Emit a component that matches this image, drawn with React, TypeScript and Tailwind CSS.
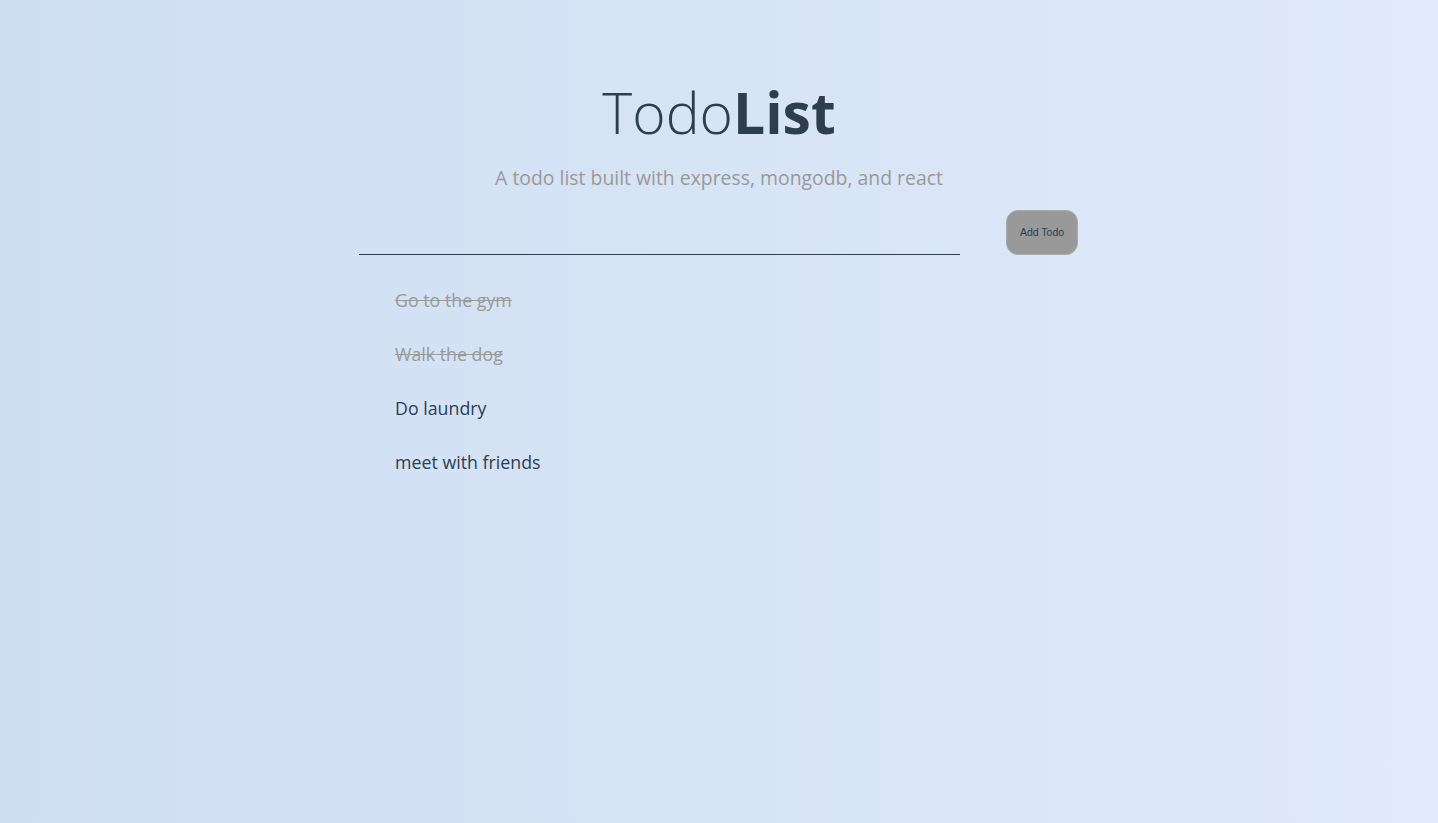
import React from 'react';

const App: React.FC = () => {
  const todos = [
    { text: 'Go to the gym', done: true },
    { text: 'Walk the dog', done: true },
    { text: 'Do laundry', done: false },
    { text: 'meet with friends', done: false }
  ];

  return (
    <div className="min-h-screen bg-gradient-to-r from-[#cedef2] to-[#e0eafa] font-['Open_Sans',sans-serif]">
      <div className="w-[720px] mx-auto pt-[74px]">
        {/* Header */}
        <h1 className="text-center text-[57px] leading-[76px] text-[#2c3e50]">
          <span className="font-light">Todo</span>
          <span className="font-bold">List</span>
        </h1>
        <p className="text-center text-[19.4px] leading-[28px] mt-[14px] text-[#999]">
          A todo list built with express, mongodb, and react
        </p>

        {/* Input row */}
        <div className="flex items-end gap-[46px] mt-[18px] mr-[1px]">
          <input
            type="text"
            className="flex-1 h-[45px] bg-transparent border-b border-[#2c3e50] outline-none px-2 text-[18px] text-[#2c3e50]"
          />
          <button className="w-[72px] h-[45px] rounded-[12px] bg-[#999] border border-[#aaa] text-[10.5px] text-[#2c3e50] font-['Liberation_Sans',sans-serif]">
            Add Todo
          </button>
        </div>

        {/* List */}
        <ul className="mt-[33px] pl-[36px]">
          {todos.map((todo, index) => (
            <li
              key={index}
              className={`text-[17.8px] leading-[24px] mb-[30px] ${
                todo.done ? 'line-through text-[#999]' : 'text-[#2c3e50]'
              }`}
            >
              {todo.text}
            </li>
          ))}
        </ul>
      </div>
    </div>
  );
};

export default App;
